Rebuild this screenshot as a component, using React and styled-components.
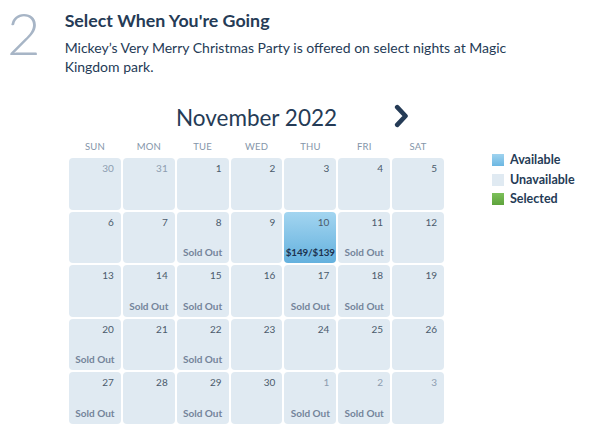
import React from 'react'
import styled, { createGlobalStyle } from 'styled-components'

const GlobalStyle = createGlobalStyle`
  body {
    margin: 0;
    background: #ffffff;
    font-family: Lato, 'Noto Sans', sans-serif;
    color: #253b56;
  }
`

const weekDays = ['SUN', 'MON', 'TUE', 'WED', 'THU', 'FRI', 'SAT']

const weeks = [
  [{ d: 30, out: true }, { d: 31, out: true }, { d: 1 }, { d: 2 }, { d: 3 }, { d: 4 }, { d: 5 }],
  [{ d: 6 }, { d: 7 }, { d: 8, sold: true }, { d: 9 }, { d: 10, price: '$149/$139' }, { d: 11, sold: true }, { d: 12 }],
  [{ d: 13 }, { d: 14, sold: true }, { d: 15, sold: true }, { d: 16 }, { d: 17, sold: true }, { d: 18, sold: true }, { d: 19 }],
  [{ d: 20, sold: true }, { d: 21 }, { d: 22, sold: true }, { d: 23 }, { d: 24 }, { d: 25 }, { d: 26 }],
  [{ d: 27, sold: true }, { d: 28 }, { d: 29, sold: true }, { d: 30 }, { d: 1, out: true, sold: true }, { d: 2, out: true, sold: true }, { d: 3, out: true }],
]

const legend = [
  { label: 'Available', kind: 'available' },
  { label: 'Unavailable', kind: 'unavailable' },
  { label: 'Selected', kind: 'selected' },
]

const App = () => {
  return (
    <>
      <GlobalStyle />
      <Page>
        <Header>
          <StepNumber>2</StepNumber>
          <HeaderText>
            <Title>Select When You're Going</Title>
            <Desc>
              Mickey’s Very Merry Christmas Party is offered on select nights at Magic
              Kingdom park.
            </Desc>
          </HeaderText>
        </Header>
        <CalSection>
          <Calendar>
            <MonthRow>
              <span />
              <MonthTitle>November 2022</MonthTitle>
              <NextButton aria-label='Next month'>
                <svg width='15' height='24' viewBox='0 0 15 24'>
                  <path
                    d='M3.2 3.2 L11.5 12 L3.2 20.8'
                    fill='none'
                    stroke='#253b56'
                    strokeWidth='4.6'
                    strokeLinecap='round'
                    strokeLinejoin='round'
                  />
                </svg>
              </NextButton>
            </MonthRow>
            <WeekRow>
              {weekDays.map((w) => (
                <WeekDay key={w}>{w}</WeekDay>
              ))}
            </WeekRow>
            <Grid>
              {weeks.flat().map((c, i) => (
                <Cell key={i} $available={!!c.price}>
                  <DayNum $out={c.out}>{c.d}</DayNum>
                  {c.sold && <SoldOut>Sold Out</SoldOut>}
                  {c.price && <Price>{c.price}</Price>}
                </Cell>
              ))}
            </Grid>
          </Calendar>
          <Legend>
            {legend.map((l) => (
              <LegendItem key={l.label}>
                <Swatch $kind={l.kind} />
                {l.label}
              </LegendItem>
            ))}
          </Legend>
        </CalSection>
      </Page>
    </>
  )
}

export default App

const Page = styled.div`
  width: 593px;
  height: 445px;
  overflow: hidden;
`

const Header = styled.div`
  display: flex;
  align-items: flex-start;
`

const StepNumber = styled.div`
  flex: 0 0 auto;
  padding: 0 0 0 7px;
  margin-right: 24px;
  font-size: 58px;
  font-weight: 300;
  line-height: 66px;
  color: #a7b5c6;
`

const HeaderText = styled.div`
  display: flex;
  flex-direction: column;
  padding-top: 8px;
`

const Title = styled.h2`
  margin: 0;
  font-size: 17.8px;
  font-weight: 700;
  line-height: 24px;
  color: #253b56;
`

const Desc = styled.p`
  margin: 6px 0 0;
  width: 450px;
  font-size: 14px;
  line-height: 19px;
  color: #253b56;
`

const CalSection = styled.div`
  display: flex;
  align-items: flex-start;
  margin-top: 25px;
  padding-left: 69px;
`

const Calendar = styled.div`
  width: 375px;
`

const MonthRow = styled.div`
  display: grid;
  grid-template-columns: 1fr auto 1fr;
  align-items: center;
  height: 32px;
`

const MonthTitle = styled.div`
  font-size: 22.5px;
  font-weight: 400;
  color: #253b56;
`

const NextButton = styled.button`
  justify-self: start;
  display: flex;
  margin: -2px 0 0 57px;
  padding: 0;
  border: none;
  background: none;
`

const WeekRow = styled.div`
  display: grid;
  grid-template-columns: repeat(7, 1fr);
  gap: 2px;
  height: 25px;
  align-items: center;
  padding-top: 1px;
  box-sizing: border-box;
`

const WeekDay = styled.div`
  text-align: center;
  font-size: 9.5px;
  letter-spacing: 0.2px;
  color: #8495a9;
`

const Grid = styled.div`
  display: grid;
  grid-template-columns: repeat(7, 1fr);
  grid-auto-rows: 51.6px;
  gap: 2px;
`

const Cell = styled.div`
  display: flex;
  flex-direction: column;
  align-items: center;
  border-radius: 4px;
  background: ${({ $available }) =>
    $available ? 'linear-gradient(#a3d5f0, #64b1de)' : '#e0eaf2'};
`

const DayNum = styled.div`
  align-self: flex-end;
  padding: 4px 7px 0 0;
  font-size: 10px;
  line-height: 12px;
  color: ${({ $out }) => ($out ? '#8d9db0' : '#4b5a6c')};
`

const SoldOut = styled.div`
  margin-top: auto;
  margin-bottom: 5px;
  font-size: 10px;
  font-weight: 700;
  line-height: 12px;
  color: #74849a;
`

const Price = styled(SoldOut)`
  font-size: 9.8px;
  letter-spacing: -0.1px;
  color: #1c3250;
`

const Legend = styled.div`
  display: flex;
  flex-direction: column;
  gap: 5.5px;
  margin: 52px 0 0 48px;
`

const LegendItem = styled.div`
  display: flex;
  align-items: center;
  gap: 6px;
  font-size: 12.5px;
  font-weight: 700;
  line-height: 14px;
  color: #253b56;
`

const swatches = {
  available: 'linear-gradient(#9fd3ef, #6cb7e2)',
  unavailable: '#e0eaf2',
  selected: 'linear-gradient(#7cc05a, #5ea33c)',
}

const Swatch = styled.span`
  width: 12px;
  height: 12px;
  background: ${({ $kind }) => swatches[$kind]};
`
